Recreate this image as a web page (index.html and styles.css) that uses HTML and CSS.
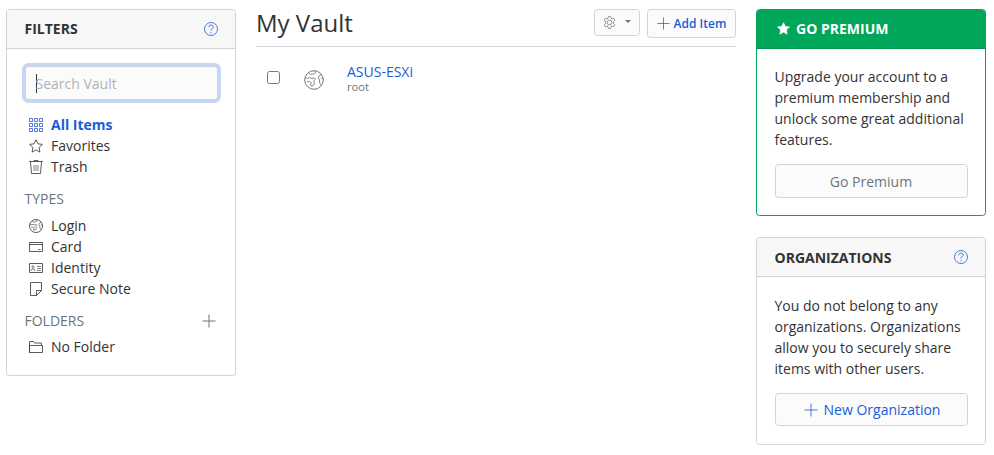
FILE: index.html
```html
<!DOCTYPE html>
<html lang="en">
<head>
<meta charset="utf-8">
<title>My Vault</title>
<link rel="stylesheet" href="styles.css">
</head>
<body>
<svg class="defs" aria-hidden="true">
  <symbol id="help" viewBox="0 0 14 14"><circle cx="7" cy="7" r="6.5"/><path d="M4.8 5.2C4.8 3.8 5.7 3 7 3s2.2.8 2.2 2S8.400 6.600 7.600 7.100Q7 7.500 7 8.600M7 10v1.200"/></symbol>
  <symbol id="globe" viewBox="0 0 14 14"><circle cx="7" cy="7" r="6.500"/><path class="land" d="M3.200 2.200L4.600 3.100 6.800 2.800 8.200 1.800 7.600.7M.8 5l1.500.9L4 5.300l1.500.7 1.600-.5.900.9-1 1v1.400l.3 1-1.100 1.200H4.800l-.4-1 .9-.8-1.400-1.200-1.700.3M12.300 3.200L10.300 4.400l-.3 1.300 1 1.300-.2 1.500.9 1.900M13.400 6.200l-1.300-.7"/></symbol>
  <symbol id="plus" viewBox="0 0 14 14"><path d="M7 .5v13M.5 7h13"/></symbol>
  <symbol id="star" viewBox="0 0 14 14"><path d="M7 .8l1.900 4 4.500.6-3.300 3.100.8 4.600L7 10.900l-3.900 2.200.8-4.600L.6 5.400l4.500-.6z"/></symbol>
</svg>
<div class="page">
  <aside class="card filters">
    <header class="card-header"><span>Filters</span><svg class="icon link"><use href="#help"/></svg></header>
    <div class="card-body">
      <div class="search"><i class="caret"></i><span>Search Vault</span></div>
      <ul class="list">
        <li class="active"><svg class="icon" viewBox="0 0 14 14"><path d="M.5.5h3v3h-3zM5.500.5h3v3h-3zM10.500.5h3v3h-3zM.5 5.500h3v3h-3zM5.500 5.500h3v3h-3zM10.500 5.500h3v3h-3zM.5 10.500h3v3h-3zM5.500 10.500h3v3h-3zM10.500 10.500h3v3h-3z"/></svg>All Items</li>
        <li><svg class="icon"><use href="#star"/></svg>Favorites</li>
        <li><svg class="icon" viewBox="0 0 14 14"><path d="M0 1.500h14M5 1.500v-1h4v1M1.500 1.500l1 12h9l1-12"/><path class="land" d="M5 5v6M7 5v6M9 5v6"/></svg>Trash</li>
      </ul>
      <h3>Types</h3>
      <ul class="list">
        <li><svg class="icon"><use href="#globe"/></svg>Login</li>
        <li><svg class="icon" viewBox="0 0 14 14"><path d="M.5 2.500h13v9H.5zM.5 4.500h13M9.500 9.500h2"/></svg>Card</li>
        <li><svg class="icon" viewBox="0 0 14 14"><path d="M.5 2.500h13v9H.5z"/><path class="land" d="M8 5.500h4M8 7.500h4M8 9.500h4M2 10l.5-1.500 1.500-.6 1.500.6L6 10M4 4.500c1.400 0 1.400 2.800 0 2.800s-1.400-2.800 0-2.800"/></svg>Identity</li>
        <li><svg class="icon" viewBox="0 0 14 14"><path d="M1.500.5h11v8l-5 5h-6zM7.500 13.500v-5h5"/></svg>Secure Note</li>
      </ul>
      <h3>Folders<svg class="icon add"><use href="#plus"/></svg></h3>
      <ul class="list">
        <li><svg class="icon" viewBox="0 0 14 14"><path d="M.5 12.500v-11h4l1 1.500h7v2M.5 5.500h13v7H.5z"/></svg>No Folder</li>
      </ul>
    </div>
  </aside>

  <main>
    <div class="page-header">
      <h1>My Vault</h1>
      <div class="actions">
        <div class="btn options"><svg class="icon gear" viewBox="0 0 14 14"><circle cx="7" cy="7" r="2.600"/><path d="M5.800.7h2.400l.4 1.700 1.200.7 1.700-.6 1.200 2.100-1.300 1.200v2.400l1.300 1.200-1.200 2.100-1.700-.6-1.200.7-.4 1.700H5.800l-.4-1.700-1.200-.7-1.700.6-1.200-2.100 1.300-1.200V5.800L1.300 4.600l1.200-2.100 1.700.6 1.200-.7z"/></svg><i class="arrow"></i></div>
        <div class="btn new-item"><svg class="icon"><use href="#plus"/></svg>Add Item</div>
      </div>
    </div>
    <div class="item">
      <input type="checkbox" aria-label="Select item">
      <svg class="icon site"><use href="#globe"/></svg>
      <div><div class="name">ASUS-ESXi</div><div class="user">root</div></div>
    </div>
  </main>

  <aside class="side">
    <section class="card premium">
      <header class="card-header"><span><svg class="icon solid"><use href="#star"/></svg>Go Premium</span></header>
      <div class="card-body">
        <p>Upgrade your account to a premium membership and unlock some great additional features.</p>
        <div class="btn block">Go Premium</div>
      </div>
    </section>
    <section class="card orgs">
      <header class="card-header"><span>Organizations</span><svg class="icon link"><use href="#help"/></svg></header>
      <div class="card-body">
        <p>You do not belong to any organizations. Organizations allow you to securely share items with other users.</p>
        <div class="btn block primary"><svg class="icon"><use href="#plus"/></svg>New Organization</div>
      </div>
    </section>
  </aside>
</div>
</body>
</html>
```
FILE: styles.css
```css
* { box-sizing: border-box; }
body {
  margin: 0;
  background: #fff;
  color: #333;
  font: 14px/21px "Open Sans", sans-serif;
}
h1, h3, p, ul { margin: 0; padding: 0; font-weight: 400; }
.defs { display: none; }
.page {
  display: grid;
  grid-template-columns: 230px 480px 230px;
  column-gap: 20px;
  align-items: start;
  padding: 9px 8px 0 6px;
}
.icon {
  flex: none;
  width: 14px;
  height: 14px;
  fill: none;
  stroke: currentColor;
  stroke-width: 0.8;
}
.land { stroke-width: 0.6; }
.link { color: #2855dc; stroke-width: 0.8; }

.card {
  border: 1px solid #ced4da;
  border-radius: 3.5px;
  overflow: hidden;
}
.card-header {
  display: flex;
  align-items: center;
  justify-content: space-between;
  height: 39px;
  padding: 0 17.5px 1px;
  background: #f7f7f7;
  border-bottom: 1px solid #ced4da;
  font-weight: 700;
  text-transform: uppercase;
}
.card-body { padding: 17px 17.5px; }
.filters { height: 367px; }

.search {
  display: flex;
  align-items: center;
  height: 34px;
  margin-bottom: 14px;
  padding-left: 10px;
  background: #fbfbfb;
  border: 1px solid #ced4da;
  border-radius: 3.5px;
  box-shadow: 0 0 0 3px #c5d6f6;
  color: #b0b3b6;
}
.caret {
  width: 1px;
  height: 19px;
  margin-right: -1px;
  background: #333;
}
.list { list-style: none; }
.list li {
  display: flex;
  align-items: center;
  gap: 8px;
  padding-left: 4.5px;
}
.list .active { color: #175ddc; font-weight: 700; }
.list .active .icon { color: #2855dc; }
.filters h3 {
  display: flex;
  align-items: center;
  justify-content: space-between;
  height: 21px;
  margin: 11px 0 6px;
  color: #6c757d;
  font-size: 14px;
  text-transform: uppercase;
}
.filters .list + h3 ~ h3 { margin-bottom: 5px; }
.add { margin-right: 2px; stroke-width: 1; }

.page-header {
  display: flex;
  justify-content: space-between;
  height: 38px;
  border-bottom: 1px solid #ced4da;
}
h1 { font-size: 24px; line-height: 28px; }
.actions { display: flex; align-items: flex-start; gap: 7px; }
.btn {
  display: flex;
  align-items: center;
  justify-content: center;
  background: #fbfbfb;
  border: 1px solid #ced4da;
  border-radius: 3.5px;
  color: #6c757d;
}
.options { width: 46px; height: 27px; gap: 9px; }
.gear { width: 13px; height: 13px; }
.arrow {
  border: 3.5px solid transparent;
  border-top-color: #6c757d;
  border-bottom: 0;
  margin-top: -2px;
}
.new-item {
  width: 89px;
  height: 29px;
  padding-bottom: 1px;
  gap: 4px;
  color: #175ddc;
  font-size: 12px;
  font-weight: 600;
}
.new-item .icon { width: 13px; height: 13px; }

.item { display: flex; padding: 14px 0 0 11px; }
.item input { width: 13px; height: 13px; margin: 10px 24px 0 0; }
.site { width: 20px; height: 20px; margin: 9px 23px 0 0; color: #6c757d; stroke-width: 0.7; }
.name { padding-top: 3px; color: #175ddc; line-height: 15px; }
.user { padding-top: 1px; color: #6c757d; font-size: 11.2px; line-height: 14px; }

.side { display: grid; row-gap: 21px; }
.side p { margin-bottom: 14px; }
.block { height: 34px; }
.primary { gap: 6px; height: 33px; padding-left: 2px; color: #175ddc; }
.premium { height: 207px; border-color: #00a65a; }
.premium .card-header { background: #00a65a; border-color: #00954f; color: #fff; }
.premium .card-header span { display: flex; align-items: center; gap: 6px; padding-left: 1.5px; }
.solid { width: 13px; height: 13px; margin: 0 0 0 1px; fill: currentColor; }
.orgs { height: 208px; }
.orgs .card-header { padding-bottom: 0; }
.orgs .card-body { padding-top: 18px; }
```
